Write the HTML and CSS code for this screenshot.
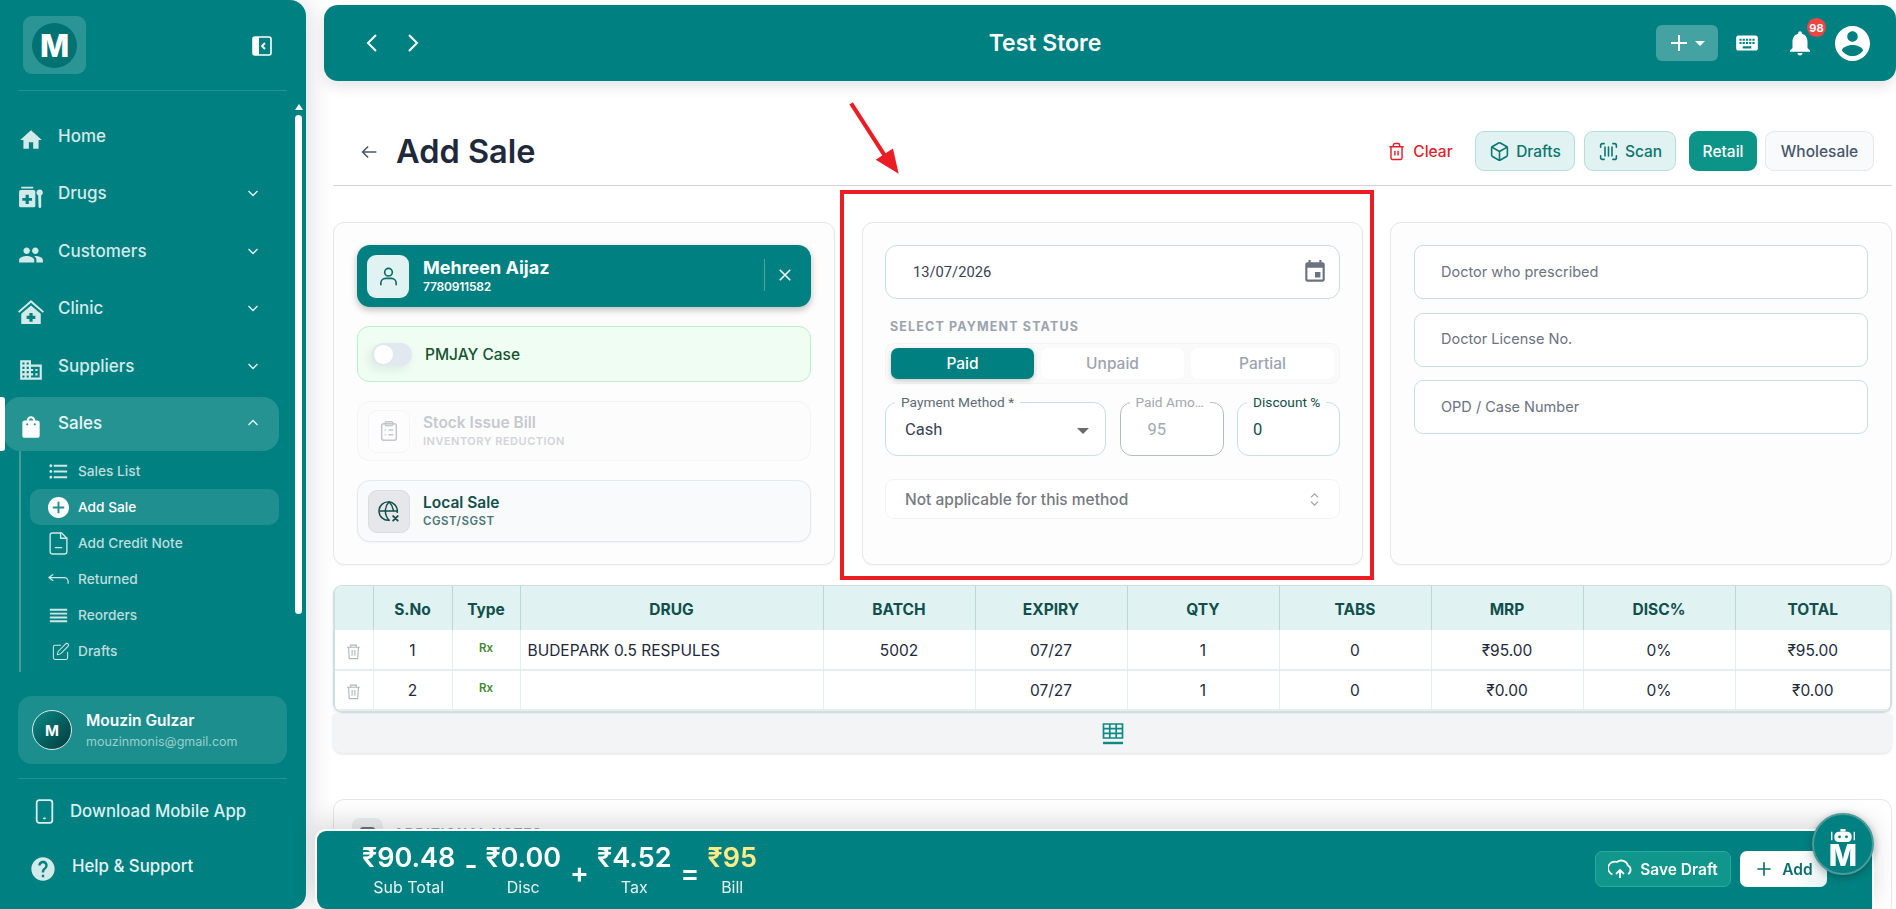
FILE: index.html
```html
<!DOCTYPE html>
<html lang="en">
<head>
<meta charset="utf-8">
<title>Add Sale</title>
<link rel="stylesheet" href="styles.css">
</head>
<body>
<aside class="sidebar">
  <div class="brand">
    <div class="logo"><span class="logo-circle">M</span></div>
    <svg class="collapse" viewBox="0 0 20 20"><rect x="1" y="1" width="18" height="18" rx="2" fill="none" stroke="#fff" stroke-width="1.6"/><path d="M1 3a2 2 0 0 1 2-2h4v18H3a2 2 0 0 1-2-2z" fill="#fff"/><path d="M13 7l-3 3 3 3" fill="none" stroke="#fff" stroke-width="1.8"/></svg>
  </div>
  <nav class="nav">
    <a class="nav-item"><svg class="nav-icon" viewBox="0 0 24 24"><path d="M10 20v-6h4v6h5v-8h3L12 3 2 12h3v8z"/></svg><span>Home</span></a>
    <a class="nav-item"><svg class="nav-icon" viewBox="0 0 24 24"><path d="M2 2.500h11v1.600H2zM1.500 5.500h12A1.500 1.500 0 0 1 15 7v13a1.500 1.500 0 0 1-1.500 1.500h-12A1.500 1.500 0 0 1 0 20V7a1.500 1.500 0 0 1 1.500-1.500zM6 10v3H3v2.500h3v3h3v-3h3V13H9v-3z" transform="translate(1 0)"/><path d="M20 5a3 3 0 0 1 1.400 5.650V21a1.200 1.200 0 0 1-2.400 0l-.4-10.350A3 3 0 0 1 20 5z"/></svg><span>Drugs</span><svg class="chev" viewBox="0 0 12 12"><path d="M1.500 4l4.500 4.500L10.500 4"/></svg></a>
    <a class="nav-item"><svg class="nav-icon" viewBox="0 0 24 24"><path d="M16 11c1.660 0 2.990-1.340 2.990-3S17.660 5 16 5c-1.660 0-3 1.340-3 3s1.340 3 3 3zm-8 0c1.660 0 2.990-1.340 2.990-3S9.660 5 8 5C6.340 5 5 6.340 5 8s1.340 3 3 3zm0 2c-2.330 0-7 1.170-7 3.500V19h14v-2.500c0-2.330-4.670-3.500-7-3.500zm8 0c-.29 0-.62.02-.97.05 1.160.84 1.970 1.970 1.970 3.450V19h6v-2.500c0-2.330-4.670-3.500-7-3.500z"/></svg><span>Customers</span><svg class="chev" viewBox="0 0 12 12"><path d="M1.500 4l4.500 4.500L10.500 4"/></svg></a>
    <a class="nav-item"><svg class="nav-icon" viewBox="0 0 24 24"><path d="M12 1L0 11.500l1.200 1.300L12 3.500l10.800 9.300 1.200-1.300z"/><path d="M12 6L3 13.500V23h18v-9.500zm-1.500 7h3v2.500H16v3h-2.500V21h-3v-2.500H8v-3h2.500z"/></svg><span>Clinic</span><svg class="chev" viewBox="0 0 12 12"><path d="M1.500 4l4.500 4.500L10.500 4"/></svg></a>
    <a class="nav-item"><svg class="nav-icon" viewBox="0 0 24 24"><path d="M12 7V3H2v18h20V7H12zM6 19H4v-2h2v2zm0-4H4v-2h2v2zm0-4H4V9h2v2zm0-4H4V5h2v2zm4 12H8v-2h2v2zm0-4H8v-2h2v2zm0-4H8V9h2v2zm0-4H8V5h2v2zm10 12h-8v-2h2v-2h-2v-2h2v-2h-2V9h8v10zm-2-8h-2v2h2v-2zm0 4h-2v2h2v-2z"/></svg><span>Suppliers</span><svg class="chev" viewBox="0 0 12 12"><path d="M1.500 4l4.500 4.500L10.500 4"/></svg></a>
    <a class="nav-item active"><svg class="nav-icon" viewBox="0 0 24 24"><path d="M18 6h-2c0-2.210-1.790-4-4-4S8 3.790 8 6H6c-1.100 0-2 .9-2 2v12c0 1.100.9 2 2 2h12c1.100 0 2-.9 2-2V8c0-1.100-.9-2-2-2zm-6-2c1.100 0 2 .9 2 2h-4c0-1.100.9-2 2-2zM8.500 8.500a1 1 0 1 1 0 2 1 1 0 0 1 0-2zm7 0a1 1 0 1 1 0 2 1 1 0 0 1 0-2z" fill-rule="evenodd"/></svg><span>Sales</span><svg class="chev" viewBox="0 0 12 12"><path d="M1.500 8L6 3.500 10.500 8"/></svg></a>
    <div class="subnav">
      <a class="sub-item"><svg class="sub-icon" viewBox="0 0 24 24"><path d="M4 10.500c-.83 0-1.500.67-1.500 1.500s.67 1.500 1.500 1.500 1.500-.67 1.500-1.500-.67-1.500-1.500-1.500zm0-6c-.83 0-1.500.67-1.500 1.500S3.170 7.500 4 7.500 5.500 6.830 5.500 6 4.830 4.500 4 4.500zm0 12c-.83 0-1.500.68-1.500 1.500s.68 1.500 1.500 1.500 1.500-.68 1.500-1.500-.67-1.500-1.500-1.500zM7 19h14v-2H7v2zm0-6h14v-2H7v2zm0-8v2h14V5H7z"/></svg><span>Sales List</span></a>
      <a class="sub-item current"><svg class="sub-icon" viewBox="0 0 24 24"><path d="M12 1C5.900 1 1 5.900 1 12s4.900 11 11 11 11-4.900 11-11S18.100 1 12 1zm6 12h-5v5h-2v-5H6v-2h5V6h2v5h5z"/></svg><span>Add Sale</span></a>
      <a class="sub-item"><svg class="sub-line" viewBox="2 1 20 22"><path d="M15 2H6a2 2 0 0 0-2 2v16a2 2 0 0 0 2 2h12a2 2 0 0 0 2-2V7z"/><path d="M14 2v5h6M9 16h6"/></svg><span>Add Credit Note</span></a>
      <a class="sub-item"><svg class="sub-line" viewBox="0 0 24 24"><path d="M6 7l-4 3 4 3M2 10h16a4 4 0 0 1 4 4v2"/></svg><span>Returned</span></a>
      <a class="sub-item"><svg class="sub-icon" viewBox="0 0 24 24"><path d="M3 15h18v-2H3v2zm0 4h18v-2H3v2zm0-8h18V9H3v2zm0-6v2h18V5H3z"/></svg><span>Reorders</span></a>
      <a class="sub-item"><svg class="sub-line small" viewBox="0 0 24 24"><path d="M12 4H5a2 2 0 0 0-2 2v14a2 2 0 0 0 2 2h14a2 2 0 0 0 2-2v-7"/><path d="M18.500 2.500a2.100 2.100 0 0 1 3 3L12 15l-4 1 1-4z"/></svg><span>Drafts</span></a>
    </div>
  </nav>
  <div class="user-card">
    <div class="avatar">M</div>
    <div class="user-text"><div class="user-name">Mouzin Gulzar</div><div class="user-mail">mouzinmonis@gmail.com</div></div>
  </div>
  <div class="side-links">
    <a class="side-link"><svg class="phone" viewBox="0 0 18 24"><rect x="1.500" y="1" width="15" height="22" rx="2.500"/><path d="M8.500 18.500h1"/></svg><span>Download Mobile App</span></a>
    <a class="side-link help"><svg class="help-icon" viewBox="0 0 24 24"><path d="M12 2C6.480 2 2 6.480 2 12s4.480 10 10 10 10-4.480 10-10S17.520 2 12 2zm1 17h-2v-2h2v2zm2.070-7.750l-.9.92C13.450 12.900 13 13.500 13 15h-2v-.5c0-1.100.45-2.100 1.170-2.830l1.240-1.260c.37-.36.59-.86.59-1.410 0-1.100-.9-2-2-2s-2 .9-2 2H8c0-2.210 1.790-4 4-4s4 1.790 4 4c0 .88-.36 1.680-.93 2.250z"/></svg><span>Help &amp; Support</span></a>
  </div>
  <div class="scroll-arrow"></div>
  <div class="scroll-thumb"></div>
  <div class="active-bar"></div>
</aside>

<main class="main">
  <header class="topbar">
    <div class="hist">
      <svg viewBox="0 0 14 22"><path d="M11 3L3 11l8 8"/></svg>
      <svg viewBox="0 0 14 22"><path d="M3 3l8 8-8 8"/></svg>
    </div>
    <div class="store">Test Store</div>
    <div class="top-actions">
      <div class="quick"><svg class="quick-plus" viewBox="0 0 18 18"><path d="M9 1v16M1 9h16"/></svg><span class="caret"></span></div>
      <svg class="kbd" viewBox="0 0 24 24"><path d="M20 5H4c-1.100 0-1.990.9-1.990 2L2 17c0 1.100.9 2 2 2h16c1.100 0 2-.9 2-2V7c0-1.100-.9-2-2-2zm-9 3h2v2h-2V8zm0 3h2v2h-2v-2zM8 8h2v2H8V8zm0 3h2v2H8v-2zm-1 2H5v-2h2v2zm0-3H5V8h2v2zm9 7H8v-2h8v2zm0-4h-2v-2h2v2zm0-3h-2V8h2v2zm3 3h-2v-2h2v2zm0-3h-2V8h2v2z"/></svg>
      <div class="bell"><svg viewBox="0 0 24 24"><path d="M12 22c1.100 0 2-.9 2-2h-4c0 1.100.89 2 2 2zm6-6v-5c0-3.070-1.640-5.640-4.500-6.320V4c0-.83-.67-1.500-1.500-1.500s-1.500.67-1.500 1.500v.68C7.630 5.360 6 7.920 6 11v5l-2 2v1h16v-1l-2-2z"/></svg><span class="badge">98</span></div>
      <svg class="account" viewBox="2 2 20 20"><path d="M12 2C6.480 2 2 6.480 2 12s4.480 10 10 10 10-4.480 10-10S17.520 2 12 2zm0 3c1.660 0 3 1.340 3 3s-1.340 3-3 3-3-1.340-3-3 1.340-3 3-3zm0 14.200c-2.500 0-4.710-1.280-6-3.220.03-1.990 4-3.080 6-3.080 1.990 0 5.970 1.090 6 3.080-1.290 1.940-3.500 3.220-6 3.220z"/></svg>
    </div>
  </header>

  <div class="page">
    <div class="title-row">
      <svg class="back" viewBox="0 0 24 24"><path d="M20 12H5M11 6l-6 6 6 6"/></svg>
      <h1>Add Sale</h1>
      <div class="title-actions">
        <button class="btn-clear"><svg viewBox="0 0 24 24"><path d="M3 6h18M8 6V4a2 2 0 0 1 2-2h4a2 2 0 0 1 2 2v2M19 6v14a2 2 0 0 1-2 2H7a2 2 0 0 1-2-2V6M10 11v6M14 11v6"/></svg>Clear</button>
        <button class="btn-soft drafts"><svg viewBox="0 0 24 24"><path d="M21 8a2 2 0 0 0-1-1.730l-7-4a2 2 0 0 0-2 0l-7 4A2 2 0 0 0 3 8v8a2 2 0 0 0 1 1.730l7 4a2 2 0 0 0 2 0l7-4A2 2 0 0 0 21 16z"/><path d="M3.300 7L12 12l8.700-5M12 22V12"/></svg>Drafts</button>
        <button class="btn-soft scan"><svg viewBox="0 0 24 24"><path d="M3 7V5a2 2 0 0 1 2-2h2M17 3h2a2 2 0 0 1 2 2v2M21 17v2a2 2 0 0 1-2 2h-2M7 21H5a2 2 0 0 1-2-2v-2M8 7v10M12 7v10M16 7v10"/></svg>Scan</button>
        <button class="btn-retail">Retail</button>
        <button class="btn-whole">Wholesale</button>
      </div>
    </div>

    <section class="cards">
      <div class="card left">
        <div class="customer">
          <div class="cust-icon"><svg viewBox="0 0 24 24"><circle cx="12" cy="7.500" r="4"/><path d="M4 21v-2a5 5 0 0 1 5-5h6a5 5 0 0 1 5 5v2"/></svg></div>
          <div class="cust-text"><div class="cust-name">Mehreen Aijaz</div><div class="cust-phone">7780911582</div></div>
          <div class="cust-close"><svg viewBox="0 0 24 24"><path d="M5 5l14 14M19 5L5 19"/></svg></div>
        </div>
        <div class="pmjay"><span class="toggle"><span class="knob"></span></span><span>PMJAY Case</span></div>
        <div class="opt disabled">
          <div class="opt-icon"><svg viewBox="0 0 24 24"><rect x="4" y="4" width="16" height="18" rx="2"/><rect x="8" y="2" width="8" height="4" rx="1"/><path d="M8 11h.01M8 16h.01M12 11h4M12 16h4"/></svg></div>
          <div><div class="opt-title">Stock Issue Bill</div><div class="opt-sub">INVENTORY REDUCTION</div></div>
        </div>
        <div class="opt local">
          <div class="opt-icon"><svg viewBox="0 0 24 24"><path d="M21 13.500A10 10 0 1 0 12 22"/><path d="M2 12h19M12 2c-5.300 5.800-5.300 14.200 0 20M12 2c3 3 4.500 6.500 4.800 10"/><path d="M16.500 17.500l5 5M21.500 17.500l-5 5" class="heavy"/></svg></div>
          <div><div class="opt-title">Local Sale</div><div class="opt-sub">CGST/SGST</div></div>
        </div>
      </div>

      <div class="card middle">
        <div class="date-field"><span>13/07/2026</span><svg viewBox="0 0 24 24"><path d="M17 12h-5v5h5v-5zM16 1v2H8V1H6v2H5c-1.110 0-1.990.9-1.990 2L3 19c0 1.100.89 2 2 2h14c1.100 0 2-.9 2-2V5c0-1.100-.9-2-2-2h-1V1h-2zm3 18H5V8h14v11z"/></svg></div>
        <div class="status-label">SELECT PAYMENT STATUS</div>
        <div class="tabs"><div class="tab on">Paid</div><div class="tab">Unpaid</div><div class="tab">Partial</div></div>
        <div class="fields">
          <div class="field method"><label>Payment Method *</label><span>Cash</span><i class="caret dark"></i></div>
          <div class="field amount"><label>Paid Amo…</label><span>95</span></div>
          <div class="field discount"><label>Discount %</label><span>0</span></div>
        </div>
        <div class="na-select"><span>Not applicable for this method</span><svg viewBox="0 0 24 24"><path d="M7 9l5-5 5 5M7 15l5 5 5-5"/></svg></div>
      </div>

      <div class="card right">
        <div class="doc-input">Doctor who prescribed</div>
        <div class="doc-input">Doctor License No.</div>
        <div class="doc-input">OPD / Case Number</div>
      </div>
    </section>

    <div class="table-wrap">
      <table class="items">
        <colgroup><col class="c-del"><col class="c-sno"><col class="c-type"><col class="c-drug"><col class="c-std"><col class="c-std"><col class="c-std"><col class="c-std"><col class="c-std"><col class="c-std"><col></colgroup>
        <thead><tr><th></th><th>S.No</th><th>Type</th><th>DRUG</th><th>BATCH</th><th>EXPIRY</th><th>QTY</th><th>TABS</th><th>MRP</th><th>DISC%</th><th>TOTAL</th></tr></thead>
        <tbody>
          <tr><td><svg class="del" viewBox="0 0 24 24"><path d="M3 6h18M8 6V3h8v3M5 6l1 16h12l1-16M10 10v8M14 10v8"/></svg></td><td>1</td><td class="rx">Rx</td><td class="drug">BUDEPARK 0.5 RESPULES</td><td>5002</td><td>07/27</td><td>1</td><td>0</td><td>₹95.00</td><td>0%</td><td>₹95.00</td></tr>
          <tr><td><svg class="del" viewBox="0 0 24 24"><path d="M3 6h18M8 6V3h8v3M5 6l1 16h12l1-16M10 10v8M14 10v8"/></svg></td><td>2</td><td class="rx">Rx</td><td class="drug"></td><td></td><td>07/27</td><td>1</td><td>0</td><td>₹0.00</td><td>0%</td><td>₹0.00</td></tr>
        </tbody>
      </table>
    </div>
    <div class="add-row"><svg viewBox="0 0 22 24"><path d="M1.500 2h19v14h-19zM1.500 6.700h19M1.500 11.300h19M7.800 2v14M14.200 2v14"/><path d="M1 21h20" class="under"/></svg></div>

    <div class="notes"><div class="notes-icon"><span></span></div><span class="notes-title">ADDITIONAL NOTES</span></div>
  </div>
</main>

<footer class="bill">
  <div class="stats">
    <div class="stat"><b>₹90.48</b><small>Sub Total</small></div>
    <span class="op minus">-</span>
    <div class="stat"><b>₹0.00</b><small>Disc</small></div>
    <span class="op">+</span>
    <div class="stat"><b>₹4.52</b><small>Tax</small></div>
    <span class="op">=</span>
    <div class="stat total"><b>₹95</b><small>Bill</small></div>
  </div>
  <div class="bill-actions">
    <button class="save"><svg viewBox="0 0 24 24"><path d="M12 13v8M8 17l4-4 4 4"/><path d="M4.500 17.500A6.500 6.500 0 0 1 9 5a7 7 0 0 1 11 3.500 4.800 4.800 0 0 1 0 8.500"/></svg>Save Draft</button>
    <button class="add"><svg viewBox="0 0 24 24"><path d="M12 4v16M4 12h16"/></svg>Add</button>
  </div>
</footer>

<div class="bot">
  <svg viewBox="0 0 30 16"><path d="M2 3v10M28 3v10" class="ant"/><rect x="5" y="3" width="20" height="12" rx="5"/><circle cx="11" cy="9" r="1.700" class="eye"/><circle cx="19" cy="9" r="1.700" class="eye"/><rect x="12" y="0" width="6" height="3"/></svg>
  <span>M</span>
</div>

<div class="mark-box"></div>
<svg class="mark-arrow" viewBox="0 0 80 100"><path d="M6 4l45 70" class="shaft"/><path d="M64 90L36 73l21-14z" class="head"/></svg>
</body>
</html>
```
FILE: styles.css
```css
* { box-sizing: border-box; }
html, body { margin: 0; height: 100%; }
body {
  width: 1896px; height: 909px; overflow: hidden; display: flex;
  font-family: Inter, "Noto Sans", sans-serif; background: #fff; color: #1f2937;
}
button { font-family: inherit; }
svg { display: block; flex: none; }

/* sidebar */
.sidebar {
  position: relative; width: 306px; height: 909px; flex: none; background: #008080;
  border-radius: 0 16px 16px 0; box-shadow: 5px 0 22px rgba(60,70,100,.16); z-index: 3;
  display: flex; flex-direction: column;
}
.brand {
  height: 91px; margin: 0 19px 0 18px; padding: 16px 15px 0 5px; display: flex; justify-content: space-between;
  align-items: flex-start; border-bottom: 1px solid rgba(255,255,255,.14);
}
.logo { width: 63px; height: 58px; border-radius: 9px; background: rgba(255,255,255,.17); display: flex; align-items: center; justify-content: center; }
.logo-circle { width: 45px; height: 45px; border-radius: 50%; background: #017272; color: #fff; font-weight: 800; font-size: 31px; display: flex; align-items: center; justify-content: center; }
.collapse { width: 20px; height: 20px; margin-top: 20px; }
.nav { padding: 18.500px 27px 0 4px; display: flex; flex-direction: column; gap: 3.500px; }
.nav-item { height: 54px; flex: none; display: flex; align-items: center; padding: 0 20px 1.500px 15px; border-radius: 16px; color: #d3eaea; font-size: 17px; font-weight: 500; }
.nav-item span { margin-left: 14px; flex: 1; }
.nav-icon { width: 26px; height: 26px; fill: #d3eaea; margin-top: 8px; margin-left: -1px; }
.chev { width: 12px; height: 12px; fill: none; stroke: #e6f3f3; stroke-width: 1.300; }
.nav-item.active { background: rgba(255,255,255,.15); color: #e8f5f5; }
.nav-item.active .nav-icon { fill: #fff; }
.subnav { margin: -3.500px 0 0 15px; height: 221px; padding: 2px 0 0 9px; border-left: 2px solid rgba(255,255,255,.25); display: flex; flex-direction: column; }
.sub-item { height: 36px; flex: none; display: flex; align-items: center; padding-left: 17px; border-radius: 10px; color: #bcdede; font-size: 13.700px; font-weight: 500; gap: 8px; }
.sub-icon { width: 23px; height: 23px; fill: #cfe7e7; }
.sub-line { width: 23px; height: 23px; fill: none; stroke: #cfe7e7; stroke-width: 1.300; stroke-linecap: round; stroke-linejoin: round; }
.sub-line.small { padding: 2px 0 2px 4px; }
.sub-item.current { background: rgba(255,255,255,.12); color: #fff; }
.sub-item.current .sub-icon { fill: #fff; }
.user-card { margin: 24px 19px 0 18px; height: 68px; border-radius: 14px; background: rgba(255,255,255,.11); display: flex; align-items: center; padding-left: 14px; gap: 14px; }
.avatar { width: 40px; height: 40px; border-radius: 50%; border: 1px solid #d5e8e8; background: linear-gradient(135deg, #0a8a88, #013a3a); color: #fff; font-weight: 700; font-size: 15px; display: flex; align-items: center; justify-content: center; }
.user-name { color: #fff; font-size: 15.500px; font-weight: 600; line-height: 20px; margin-top: 1px; }
.user-mail { color: #99cfcc; font-size: 12.500px; line-height: 18px; margin-top: 2px; }
.side-links { margin: 14px 19px 0 18px; border-top: 1px solid rgba(255,255,255,.14); padding-top: 10px; }
.side-link { height: 44px; display: flex; align-items: center; color: #dcefef; font-size: 16.800px; font-weight: 500; padding-left: 17px; gap: 16px; }
.side-link.help { margin-top: 11px; padding-left: 15px; gap: 15px; color: #e6f3f3; }
.phone { width: 19px; height: 25px; fill: none; stroke: #dcefef; stroke-width: 1.700; stroke-linecap: round; }
.help-icon { width: 28px; height: 28px; fill: #d3eaea; margin-top: 6px; margin-left: -4px; }
.scroll-arrow { position: absolute; left: 295px; top: 104px; width: 0; height: 0; border: 4px solid transparent; border-top: 0; border-bottom: 6px solid #fff; }
.scroll-thumb { position: absolute; left: 295px; top: 115px; width: 7px; height: 499px; border-radius: 4px; background: #fff; }
.active-bar { position: absolute; left: 0; top: 397px; width: 5px; height: 54px; background: #fff; border-radius: 0 3px 3px 0; }

/* main */
.main { flex: 1; min-width: 0; padding: 5px 0 0 18px; overflow: hidden; }
.topbar { height: 76px; background: #008080; border-radius: 14px; display: flex; align-items: center; padding: 0 26px 0 41px; position: relative; box-shadow: 0 6px 14px rgba(0,0,0,.1); color: #fff; }
.hist { display: flex; gap: 27px; }
.hist svg { width: 14px; height: 22px; fill: none; stroke: #fff; stroke-width: 2; }
.store { position: absolute; left: 0; right: 130px; text-align: center; font-size: 23px; font-weight: 600; pointer-events: none; }
.top-actions { margin-left: auto; display: flex; align-items: center; }
.quick { width: 62px; height: 36px; border-radius: 6px; background: rgba(255,255,255,.27); display: flex; align-items: center; justify-content: center; gap: 7px; }
.quick-plus { width: 18px; height: 18px; fill: none; stroke: #fff; stroke-width: 2; }
.caret { width: 0; height: 0; border: 5px solid transparent; border-bottom: 0; border-top: 5px solid #fff; }
.kbd { width: 26px; height: 26px; fill: #fff; margin-left: 16px; }
.bell { position: relative; width: 30px; height: 30px; margin-left: 25px; }
.bell svg { width: 30px; height: 30px; fill: #fff; }
.badge { position: absolute; left: 22px; top: -10px; width: 19px; height: 19px; border-radius: 50%; background: #ef4444; color: #fff; font-size: 11px; font-weight: 700; display: flex; align-items: center; justify-content: center; }
.account { width: 35px; height: 35px; fill: #fff; margin-left: 20px; }

.page { padding: 50px 4px 0 9px; }
.title-row { height: 55px; border-bottom: 1px solid #d1d5db; display: flex; align-items: flex-start; padding: 0 18px 0 0; }
.back { width: 22px; height: 22px; fill: none; stroke: #4b5563; stroke-width: 1.700; margin: 10px 0 0 25px; }
h1 { margin: 0 0 0 16px; font-size: 32.500px; line-height: 42px; font-weight: 600; color: #1e293b; }
.title-actions { margin-left: auto; display: flex; align-items: center; height: 40px; }
.title-actions button { height: 40px; border-radius: 9px; font-size: 15.500px; font-weight: 500; display: flex; align-items: center; justify-content: center; padding: 0; }
.btn-clear { background: none; border: 0; color: #e11d2a; gap: 7px; width: 70px; margin-right: 20px; }
.btn-clear svg { width: 19px; height: 19px; fill: none; stroke: #e11d2a; stroke-width: 1.800; }
.btn-soft { background: #e0f2f1; border: 1px solid #b5dedb; color: #0c7570; gap: 6px; }
.btn-soft svg { width: 21px; height: 21px; fill: none; stroke: #0c7570; stroke-width: 1.800; stroke-linecap: round; }
.drafts { width: 100px; margin-right: 9px; }
.scan { width: 92px; margin-right: 13px; }
.btn-retail { width: 68px; background: #0d9488; border: 0; color: #fff; margin-right: 8px; }
.btn-whole { width: 109px; background: #f8fafc; border: 1px solid #e5e7eb; color: #475569; }

.cards { margin-top: 36px; display: grid; grid-template-columns: 502px 501px 1fr; column-gap: 27px; height: 343px; }
.card { background: #fdfdfd; border: 1px solid #e5e7eb; border-radius: 11px; padding: 22px 23px; box-shadow: 0 1px 2px rgba(0,0,0,.04); }
.card.middle { padding: 22px; }
.customer { height: 62px; border-radius: 13px; background: #008080; box-shadow: 0 3px 7px rgba(0,0,0,.25); display: flex; align-items: center; padding-left: 10px; color: #fff; }
.cust-icon { width: 42px; height: 43px; border-radius: 9px; background: #e0f2f1; display: flex; align-items: center; justify-content: center; }
.cust-icon svg { width: 23px; height: 23px; fill: none; stroke: #0b6b68; stroke-width: 1.700; }
.cust-text { margin-left: 14px; flex: 1; }
.cust-name { font-size: 18px; font-weight: 700; line-height: 24px; margin-top: -3px; }
.cust-phone { font-size: 12px; font-weight: 600; line-height: 14px; letter-spacing: -.2px; }
.cust-close { height: 32px; width: 47px; padding-right: 6px; border-left: 1px solid rgba(255,255,255,.3); display: flex; align-items: center; justify-content: center; margin-top: -2px; }
.cust-close svg { width: 18px; height: 18px; fill: none; stroke: #fff; stroke-width: 2; }
.pmjay { margin-top: 19px; height: 56px; border-radius: 12px; background: #effdf3; border: 1px solid #bbf0cb; display: flex; align-items: center; padding-left: 14px; gap: 13px; font-size: 15.500px; font-weight: 500; color: #14532d; }
.toggle { width: 40px; height: 23px; border-radius: 12px; background: #e2e8f0; position: relative; box-shadow: -3px 4px 8px rgba(100,120,110,.12); }
.knob { position: absolute; left: 2px; top: 2px; width: 19px; height: 19px; border-radius: 50%; background: #fff; }
.opt { margin-top: 19px; border-radius: 13px; display: flex; align-items: center; padding-left: 10px; gap: 13px; }
.opt-icon { width: 42px; height: 43px; border-radius: 9px; display: flex; align-items: center; justify-content: center; }
.opt-icon svg { width: 22px; height: 22px; fill: none; stroke-width: 1.600; stroke-linecap: round; }
.opt-title { font-size: 15.500px; font-weight: 600; line-height: 20px; }
.opt-sub { font-size: 11px; font-weight: 600; line-height: 16px; letter-spacing: .5px; }
.opt.disabled { height: 60px; border: 1px solid #f3f4f6; background: #fcfcfd; }
.opt.disabled .opt-icon { border: 1px solid #f4f5f6; background: #fdfdfe; }
.opt.disabled svg { stroke: #c4c6ca; }
.opt.disabled .opt-title { color: #c7c9cd; }
.opt.disabled .opt-sub { color: #d2d4d8; }
.opt.local { height: 62px; border: 1px solid #e2e8f0; background: #f8fafc; box-shadow: 0 1px 2px rgba(0,0,0,.05); }
.opt.local .opt-icon { background: #e5e7eb; border: 1px solid #d9dde2; }
.opt.local svg { stroke: #134e4a; }
.opt.local .opt-title { color: #134e4a; }
.opt.local .opt-sub { color: #4b7573; font-size: 11.500px; }
.heavy { stroke-width: 2; }

.date-field { height: 54px; border: 1px solid #c9dfdf; border-radius: 12px; display: flex; align-items: center; justify-content: space-between; padding: 0 11px 0 27px; font-family: Roboto, sans-serif; font-size: 14.700px; color: #374151; background: #fff; }
.date-field svg { width: 26px; height: 26px; fill: #6b7280; }
.status-label { margin: 20px 0 0 5px; font-size: 12.500px; line-height: 16px; font-weight: 700; letter-spacing: 1.150px; color: #9ca3af; }
.tabs { margin-top: 8px; height: 41px; border-radius: 9px; background: #fafafa; border: 1px solid #f3f4f6; padding: 4px 5px; display: grid; grid-template-columns: repeat(3, 1fr); column-gap: 7px; }
.tab { border-radius: 7px; background: #fff; font-size: 15.500px; font-weight: 500; color: #9ca3af; display: flex; align-items: center; justify-content: center; }
.tab.on { background: #008080; color: #fff; box-shadow: 0 2px 5px rgba(0,0,0,.2); }
.fields { margin-top: 18px; display: grid; grid-template-columns: 221px 104px 103px; column-gap: 13.500px; height: 54px; }
.field { position: relative; border: 1px solid #c9dfdf; border-radius: 12px; background: #fff; display: flex; align-items: center; padding-left: 20px; font-family: Roboto, sans-serif; font-size: 16.500px; color: #374151; }
.field label { position: absolute; left: 9px; top: -9px; padding: 0 6px; background: #fdfdfd; font-size: 13.700px; line-height: 16px; color: #5f6b76; white-space: nowrap; }
.field.method span { color: #374151; }
.field.method { padding-left: 19px; }
.caret.dark { position: absolute; right: 16px; top: 25px; border-width: 6px; border-bottom: 0; border-top-color: #6b6b6b; }
.field.amount { border-color: #b7bcc0; padding-left: 27px; }
.field.amount span { color: #a3a8ad; }
.field.amount label { color: #a3a8ad; }
.field.discount { padding-left: 15px; }
.field.discount span, .field.discount label { color: #134e4a; }
.na-select { margin-top: 23px; height: 40px; border: 1px solid #f1f3f5; border-radius: 9px; background: #fff; display: flex; align-items: center; justify-content: space-between; padding: 0 16px 0 19px; font-size: 15.500px; font-weight: 500; color: #757a80; }
.na-select svg { width: 17px; height: 17px; fill: none; stroke: #9ca3af; stroke-width: 1.800; }

.card.right { padding-top: 22px; display: flex; flex-direction: column; gap: 13.500px; }
.doc-input { height: 54px; border: 1px solid #c9dfdf; border-radius: 9px; background: #fff; display: flex; align-items: center; padding: 0 0 2px 26px; font-size: 14.500px; color: #6b7280; }

.table-wrap { margin-top: 20px; height: 128px; border: 2px solid #cfe0e0; border-top-width: 1px; border-radius: 9px; overflow: hidden; box-shadow: 0 1px 3px rgba(0,0,0,.1); }
.items { width: 100%; border-collapse: collapse; table-layout: fixed; font-size: 15.500px; }
.c-del { width: 38px; } .c-sno { width: 79px; } .c-type { width: 68px; } .c-drug { width: 303px; } .c-std { width: 152px; }
.items th { height: 44px; background: #e0f2f1; color: #0f4f4c; font-weight: 700; font-size: 15.500px; border-right: 1px solid #b9d8d6; padding: 3px 0 0; }
.items td { height: 40px; text-align: center; color: #1e293b; border-right: 1px solid #e5eeee; border-bottom: 2px solid #e5eeee; padding: 1px 0 0; font-weight: 400; background: #fff; }
.items th:last-child, .items td:last-child { border-right: 0; }
.items td.drug { text-align: left; padding-left: 7px; font-weight: 400; }
.items td.rx { color: #3f8a2f; font-size: 11.500px; font-weight: 600; padding: 0 0 4px; }
.del { width: 17px; height: 17px; margin: 2px auto 0 auto; fill: none; stroke: #b4b8bc; stroke-width: 1.700; }
.add-row { margin-top: 1px; height: 39px; background: #f3f4f6; border-radius: 0 0 9px 9px; box-shadow: 0 1px 3px rgba(0,0,0,.12); display: flex; align-items: center; justify-content: center; }
.add-row svg { width: 22px; height: 24px; fill: none; stroke: #0d8a83; stroke-width: 1.700; }
.under { stroke-width: 2.400; }
.notes { margin-top: 46px; height: 120px; border: 1px solid #e5e7eb; border-radius: 11px; padding: 18px 18px 0; display: flex; align-items: flex-start; gap: 11px; background: #fff; }
.notes-icon { width: 31px; height: 31px; border-radius: 8px; background: #f0f1f3; padding: 9px 8px; }
.notes-icon span { display: block; width: 15px; height: 15px; border: 2px solid #6b7280; border-radius: 3px; }
.notes-title { font-size: 13px; font-weight: 700; letter-spacing: 1.200px; color: #9ca3af; margin-top: 7px; }

/* footer bar */
.bill { position: fixed; left: 315px; top: 829px; width: 1559px; height: 80px; background: #008080; border: 2px solid #fff; border-bottom: 0; border-radius: 11px 11px 0 11px; box-shadow: 0 -8px 24px rgba(0,0,0,.14); display: flex; align-items: center; justify-content: space-between; padding: 0 45px 0 45px; z-index: 4; }
.stats { display: flex; align-items: flex-start; gap: 9px; color: #fff; margin-top: -2px; }
.stat { display: flex; flex-direction: column; align-items: center; }
.stat b { font-size: 27px; line-height: 36px; font-weight: 600; }
.stat small { font-size: 16px; line-height: 22px; margin-top: 0; color: #e6f3f3; }
.stat.total b { color: #fdeb86; }
.op { font-size: 28px; font-weight: 600; line-height: 36px; margin-top: 15px; width: 18px; text-align: center; }
.op.minus { margin-top: 7px; width: 12px; }
.bill-actions { display: flex; gap: 9px; margin-top: -2px; }
.bill-actions button { height: 36px; border-radius: 7px; display: flex; align-items: center; justify-content: center; font-size: 15.500px; font-weight: 600; padding: 0; }
.save { width: 136px; background: #10968a; border: 1px solid #22ad9f; color: #fff; gap: 8px; }
.save svg { width: 24px; height: 24px; fill: none; stroke: #fff; stroke-width: 1.800; }
.add { width: 87px; background: linear-gradient(100deg, #fff 60%, #e6f2f2); border: 0; color: #0c6f6b; gap: 8px; }
.add svg { width: 20px; height: 20px; fill: none; stroke: #0c6f6b; stroke-width: 2; }

.bot { position: fixed; left: 1812px; top: 813px; width: 62px; height: 62px; border-radius: 50%; background: #008080; border: 2px solid #4c9a9a; box-shadow: 0 2px 8px rgba(0,0,0,.3); z-index: 5; display: flex; flex-direction: column; align-items: center; padding-top: 14px; color: #fff; }
.bot svg { width: 26px; height: 14px; fill: #fff; }
.bot .ant { stroke: #fff; stroke-width: 1.500; }
.bot .eye { fill: #008080; }
.bot span { font-size: 30px; font-weight: 800; line-height: 24px; margin-top: 0; }

.mark-box { position: fixed; left: 840px; top: 190px; width: 534px; height: 390px; border: 4px solid #ec1c24; z-index: 6; pointer-events: none; }
.mark-arrow { position: fixed; left: 846px; top: 100px; width: 66px; height: 82px; z-index: 6; }
.shaft { stroke: #ec1c24; stroke-width: 5; fill: none; }
.head { fill: #ec1c24; }
```
